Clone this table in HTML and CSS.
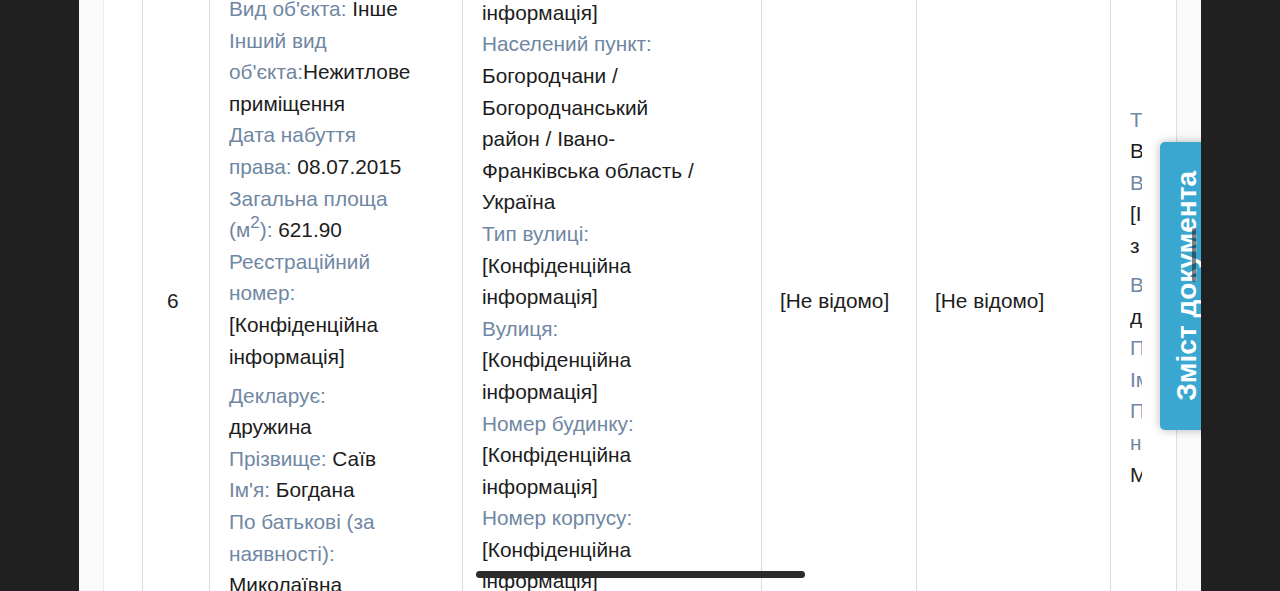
FILE: index.html
```html
<!DOCTYPE html>
<html lang="uk">
<head>
<meta charset="utf-8">
<title>Декларація</title>
<link rel="stylesheet" href="styles.css">
</head>
<body>
<div class="screen">
  <div class="scroller">
    <table class="grid">
      <tr>
        <td class="c1"></td>
        <td class="c2">6</td>
        <td class="c3">
          <div class="blk w3">
            <div><span class="lbl">Вид об'єкта:</span> Інше</div>
            <div><span class="lbl">Інший вид об'єкта:</span>Нежитлове приміщення</div>
            <div><span class="lbl">Дата набуття права:</span> 08.07.2015</div>
            <div><span class="lbl">Загальна площа (м<sup>2</sup>):</span> 621.90</div>
            <div><span class="lbl">Реєстраційний номер:</span> [Конфіденційна інформація]</div>
          </div>
          <div class="blk w3">
            <div><span class="lbl">Декларує:</span><br>дружина</div>
            <div><span class="lbl">Прізвище:</span> Саїв</div>
            <div><span class="lbl">Ім'я:</span> Богдана</div>
            <div><span class="lbl">По батькові (за наявності):</span> Миколаївна</div>
          </div>
        </td>
        <td class="c4">
          <div class="blk w4">
            <div><span class="lbl">Країна:</span> Україна</div>
            <div><span class="lbl">Поштовий індекс:</span> [Конфіденційна інформація]</div>
            <div><span class="lbl">Населений пункт:</span> Богородчани / Богородчанський район / Івано-Франківська область / Україна</div>
            <div><span class="lbl">Тип вулиці:</span> [Конфіденційна інформація]</div>
            <div><span class="lbl">Вулиця:</span> [Конфіденційна інформація]</div>
            <div><span class="lbl">Номер будинку:</span> [Конфіденційна інформація]</div>
            <div><span class="lbl">Номер корпусу:</span> [Конфіденційна інформація]</div>
            <div><span class="lbl">Номер квартири:</span> [Конфіденційна інформація]</div>
          </div>
        </td>
        <td class="c5">[Не відомо]</td>
        <td class="c6">[Не відомо]</td>
        <td class="c7">
          <div class="clip">
            <div class="blk w7">
              <div><span class="lbl">Тип права:</span> Власність</div>
              <div><span class="lbl">Вартість:</span> [Інформація з&nbsp;реєстру]</div>
            </div>
            <div class="blk w7">
              <div><span class="lbl">Власник:</span> дружина</div>
              <div><span class="lbl">Прізвище:</span> Саїв</div>
              <div><span class="lbl">Ім'я:</span> Богдана</div>
              <div><span class="lbl">По батькові (за наявності):</span> Миколаївна</div>
            </div>
          </div>
        </td>
      </tr>
    </table>
  </div>
  <div class="toc-tab"><span class="toc-text">Зміст документа</span></div>
  <div class="hbar"></div>
  <div class="vbar"></div>
</div>
</body>
</html>
```
FILE: styles.css
```css
* { box-sizing: border-box; }
html, body { margin: 0; padding: 0; }
body {
  background: #202020;
  height: 591px;
  overflow: hidden;
  font-family: "Liberation Sans", Arial, Helvetica, sans-serif;
}
.screen {
  position: relative;
  margin-left: 79px;
  width: 1122px;
  height: 591px;
  overflow: hidden;
  background: #fafafa;
  padding-left: 24px;
}
.scroller {
  width: 1074px;
  margin-top: -118px;
  background: #fff;
  border-left: 1px solid #e9e9e9;
  border-right: 1px solid #dedede;
  overflow: hidden;
}
.grid {
  border-collapse: separate;
  border-spacing: 0;
  table-layout: fixed;
  width: 1072px;
  font-size: 20.8px;
  line-height: 31.6px;
  color: #1c1c1c;
}
.grid td {
  vertical-align: middle;
  padding: 20px 18px 20px 19px;
  border-right: 1px solid #dcdcdc;
  overflow: hidden;
}
.grid td.c1 { width: 39px; padding: 0; }
.grid td.c2 { width: 67px; padding-left: 24px; }
.grid td.c3 { width: 253px; }
.grid td.c4 { width: 299px; }
.grid td.c5 { width: 155px; padding-left: 18px; }
.grid td.c6 { width: 194px; padding-left: 18px; }
.grid td.c7 { width: 65px; border-right: none; }
.blk { margin-bottom: 7.5px; }
.w3 { width: 192px; }
.w4 { width: 223px; }
.w7 { width: 160px; }
.clip { width: 12px; overflow: hidden; }
.lbl { color: #6f87a3; }
sup {
  font-size: 17px;
  line-height: 0;
  vertical-align: 9px;
}
.toc-tab {
  position: absolute;
  left: 1081px;
  top: 142px;
  width: 60px;
  height: 288px;
  background: #3aa7d0;
  border-radius: 5px 0 0 5px;
  box-shadow: 0 0 10px rgba(0, 0, 0, 0.28);
  display: flex;
  align-items: center;
  padding-left: 13px;
}
.toc-text {
  writing-mode: vertical-rl;
  transform: rotate(180deg);
  color: #fff;
  font-weight: bold;
  font-size: 28px;
  line-height: 28px;
  white-space: nowrap;
}
.hbar {
  position: absolute;
  left: 397px;
  top: 571px;
  width: 329px;
  height: 7px;
  border-radius: 4px;
  background: #2c2c2c;
}
.vbar {
  position: absolute;
  left: 1113px;
  top: 228px;
  width: 4px;
  height: 54px;
  border-radius: 2px;
  background: rgba(30, 30, 30, 0.55);
}
```
